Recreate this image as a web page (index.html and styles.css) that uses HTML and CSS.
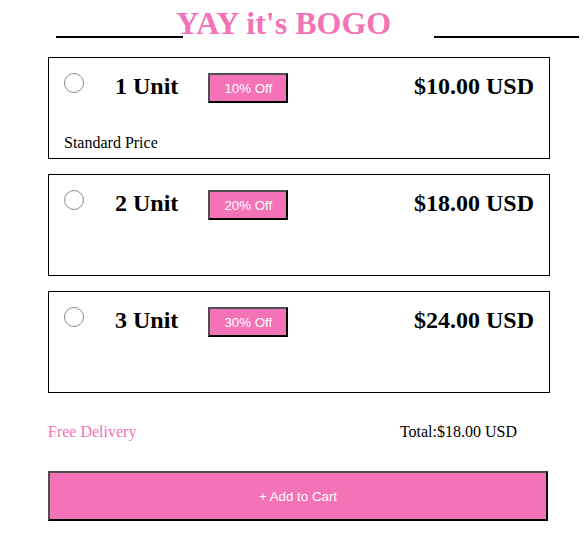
FILE: index.html
```html
<!DOCTYPE html>
<html>
<head>
<meta charset="utf-8">
<link rel="stylesheet" href="styles.css">
</head>
<body>
<div class="page">
  <header class="header">
    <span class="line line-left"></span>
    <h1 class="title">YAY it's BOGO</h1>
    <span class="line line-right"></span>
  </header>
  <div class="offers">
    <div class="card">
      <div class="row">
        <span class="radio"></span>
        <span class="unit">1 Unit</span>
        <span class="badge">10% Off</span>
        <span class="price">$10.00 USD</span>
      </div>
      <div class="note">Standard Price</div>
    </div>
    <div class="card">
      <div class="row">
        <span class="radio"></span>
        <span class="unit">2 Unit</span>
        <span class="badge">20% Off</span>
        <span class="price">$18.00 USD</span>
      </div>
    </div>
    <div class="card">
      <div class="row">
        <span class="radio"></span>
        <span class="unit">3 Unit</span>
        <span class="badge">30% Off</span>
        <span class="price">$24.00 USD</span>
      </div>
    </div>
  </div>
  <div class="summary">
    <span class="delivery">Free Delivery</span>
    <span class="total">Total:$18.00 USD</span>
  </div>
  <button class="cart">+ Add to Cart</button>
</div>
</body>
</html>
```
FILE: styles.css
```css
html, body {
  margin: 0;
  padding: 0;
  background: #fff;
}
body {
  font-family: "Liberation Serif", "Times New Roman", serif;
  color: #000;
}
.page {
  width: 585px;
}
.header {
  display: flex;
  align-items: flex-start;
  height: 41px;
}
.line {
  display: block;
  height: 2px;
  background: #000;
  margin-top: 36px;
}
.line-left {
  width: 127px;
  margin-left: 56px;
}
.line-right {
  width: 145px;
  margin-left: auto;
  margin-right: 6px;
}
.title {
  margin: 0 0 0 -7px;
  padding-top: 5px;
  font-size: 32px;
  line-height: 36px;
  font-weight: bold;
  color: #f472b6;
  white-space: nowrap;
  position: relative;
}
.offers {
  margin: 16px 0 0 48px;
  width: 502px;
  display: flex;
  flex-direction: column;
  gap: 15px;
}
.card {
  box-sizing: border-box;
  height: 102px;
  border: 1px solid #000;
  padding: 15px 15px 0 15px;
}
.row {
  display: flex;
  align-items: flex-start;
}
.radio {
  box-sizing: border-box;
  width: 20px;
  height: 20px;
  border: 1px solid #8a8a8a;
  border-radius: 50%;
  background: #fff;
  flex: none;
}
.unit {
  margin-left: 31px;
  font-size: 24px;
  font-weight: bold;
}
.badge {
  box-sizing: border-box;
  margin-left: 30px;
  width: 80px;
  height: 30px;
  display: flex;
  align-items: center;
  justify-content: center;
  background: #f472b6;
  color: #fff;
  font-family: "Liberation Sans", Arial, sans-serif;
  font-size: 13.333px;
  border: 2px solid;
  border-color: #4f4f4f #000 #000 #4f4f4f;
}
.price {
  margin-left: auto;
  font-size: 24px;
  font-weight: bold;
}
.note {
  margin-top: 31px;
  font-size: 16px;
}
.summary {
  margin: 30px 0 0 48px;
  width: 502px;
  box-sizing: border-box;
  padding-right: 33px;
  display: flex;
  justify-content: space-between;
  font-size: 16px;
}
.delivery {
  color: #f472b6;
}
.cart {
  display: block;
  box-sizing: border-box;
  margin: 30px 0 0 48px;
  width: 500px;
  height: 50px;
  background: #f472b6;
  color: #fff;
  font-family: "Liberation Sans", Arial, sans-serif;
  font-size: 13.333px;
  border: 2px solid;
  border-color: #4f4f4f #000 #000 #4f4f4f;
  padding: 0;
}
```
